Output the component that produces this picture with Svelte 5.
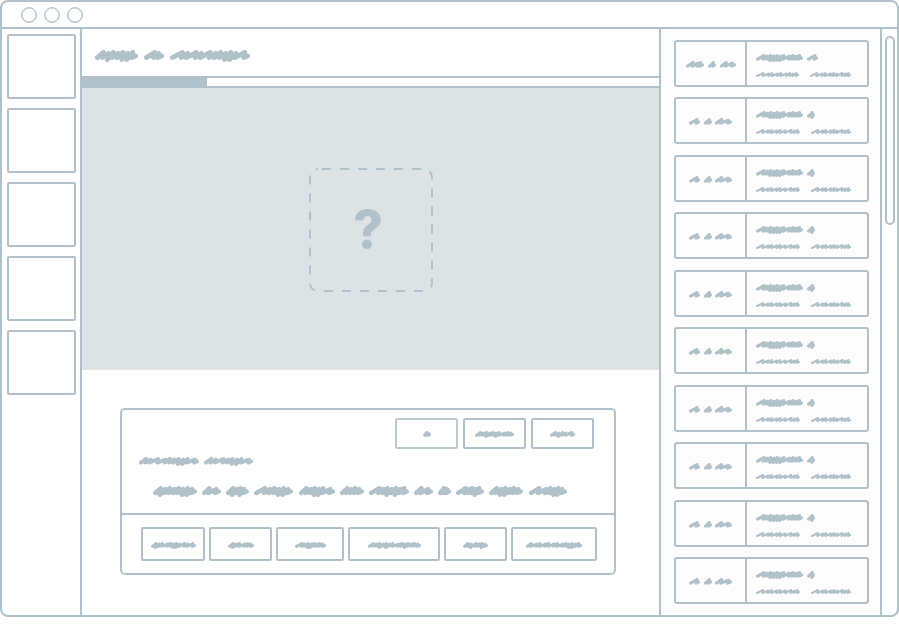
<script>
  // A word is [start, width, strokes]: w = wide stroke, n = narrow, g = narrow with a low tail
  const heading = [[0, 43, 'ngnnggn'], [49, 20, 'wn'], [75, 80, 'wnwnwnnggnw']];
  const subject = [[0, 60, 'nnwwnnggnw'], [65, 49, 'nnwnggnw']];
  const sentence = [
    [0, 44, 'gnnnnggn'], [49, 19, 'nw'], [73, 23, 'gngn'], [101, 39, 'wnnggn'],
    [146, 36, 'nnggnw'], [187, 24, 'nnnn'], [216, 40, 'wngngnn'], [261, 19, 'nw'],
    [285, 13, 'nn'], [303, 28, 'wnngn'], [336, 34, 'nggnnn'], [376, 38, 'wwnggn']
  ];
  const actions = [
    { label: 'Option', words: [[0, 8, 'nn']], light: true },
    { label: 'Second option', words: [[0, 39, 'nngnngnwnn']] },
    { label: 'Third option', words: [[0, 25, 'ngnnw']] }
  ];
  const choices = [
    { label: 'Choice 1', size: 64, words: [[0, 45, 'gnnwnggnwnw']] },
    { label: 'Choice 2', size: 63, words: [[0, 26, 'gnnwnn']] },
    { label: 'Choice 3', size: 68, words: [[0, 31, 'wnggnnnn']] },
    { label: 'Choice 4', size: 92, words: [[0, 53, 'nngngnnwngnnnn']] },
    { label: 'Choice 5', size: 63, words: [[0, 25, 'ngwngn']] },
    { label: 'Choice 6', size: 86, words: [[0, 56, 'nwnwnwnwnggnn']] }
  ];
  const firstRow = {
    side: [[0, 18, 'wwn'], [22, 8, 'w'], [34, 16, 'nw']],
    title: [[0, 47, 'wnggggnwnnn'], [51, 11, 'w']],
    left: [[0, 43, 'wwnwnwnnn']],
    right: [[0, 41, 'wwnwnnwnn']]
  };
  const otherRow = {
    side: [[0, 11, 'w'], [15, 8, 'w'], [26, 17, 'nw']],
    title: [[0, 47, 'wnggggnwnnn'], [51, 8, 'g']],
    left: [[0, 44, 'wwnwnwwnn']],
    right: [[0, 40, 'wwnwnnwnn']]
  };
  const rows = [firstRow, ...Array(9).fill(otherRow)];
  const tiles = [1, 2, 3, 4, 5];
  const progress = 21.7;

  const end = (words) => words.at(-1)[0] + words.at(-1)[1];

  function trace([start, width, strokes], height, pen) {
    const size = (c) => (c === 'w' ? 1.7 : 1);
    const total = [...strokes].reduce((sum, c) => sum + size(c), 0);
    const tail = Math.min(width / 5, height / 3);
    const unit = (width - pen - tail) / total;
    const top = pen / 2;
    const bottom = height - pen / 2;
    const rise = height / 6;
    let x = start + pen / 2;
    let d = `M${x} ${bottom - rise}`;
    [...strokes].forEach((c, i) => {
      x += unit * size(c);
      const peak = top + (i % 2) * rise * 0.5;
      const foot = c === 'g' ? bottom : bottom - rise;
      d += `L${(x + tail * 0.3).toFixed(1)} ${peak.toFixed(1)}L${x.toFixed(1)} ${foot.toFixed(1)}`;
    });
    return d + `L${start + width - pen / 2} ${height / 2}`;
  }
</script>

{#snippet scribble(words, height, pen)}
  <svg class="scribble" width={end(words)} {height} viewBox="0 0 {end(words)} {height}" aria-hidden="true">
    {#each words as word}
      <path d={trace(word, height, pen)} stroke-width={pen} />
    {/each}
  </svg>
{/snippet}

<div class="window">
  <header class="titlebar">
    <span class="dot"></span><span class="dot"></span><span class="dot"></span>
  </header>
  <div class="body">
    <nav class="tiles">
      {#each tiles as tile}
        <button class="tile" aria-label="Tile {tile}"></button>
      {/each}
    </nav>

    <main>
      <div class="heading">{@render scribble(heading, 12, 4.8)}</div>
      <div class="progress" role="progressbar" aria-label="Progress" aria-valuenow={progress}>
        <div class="bar" style="width: {progress}%"></div>
      </div>
      <div class="stage">
        <div class="drop">
          <svg class="outline" viewBox="0 0 124 124" aria-hidden="true">
            <rect x="1" y="1" width="122" height="122" rx="8" />
          </svg>
          <span class="mark">?</span>
        </div>
      </div>
      <section class="panel">
        <div class="question">
          <div class="actions">
            {#each actions as action}
              <button class="box action" class:light={action.light} aria-label={action.label}>
                {@render scribble(action.words, 7, 3)}
              </button>
            {/each}
          </div>
          <div class="subject">{@render scribble(subject, 9, 3.8)}</div>
          <div class="sentence">{@render scribble(sentence, 11, 4.5)}</div>
        </div>
        <div class="choices">
          {#each choices as choice}
            <button class="box" style="width: {choice.size}px" aria-label={choice.label}>
              {@render scribble(choice.words, 7, 3)}
            </button>
          {/each}
        </div>
      </section>
    </main>

    <aside class="list">
      {#each rows as row}
        <article class="card">
          <div class="side">{@render scribble(row.side, 8, 3.2)}</div>
          <div class="info">
            {@render scribble(row.title, 8, 3.2)}
            <div class="details">
              {@render scribble(row.left, 6, 2.2)}
              {@render scribble(row.right, 6, 2.2)}
            </div>
          </div>
        </article>
      {/each}
    </aside>

    <div class="track"><div class="thumb"></div></div>
  </div>
</div>

<style>
  :global(body) {
    margin: 0;
    background: #fff;
  }
  .window,
  .window * {
    box-sizing: border-box;
  }
  .window {
    --line: #b0c1ca;
    display: flex;
    flex-direction: column;
    min-height: calc(100vh - 9px);
    border: 2px solid var(--line);
    border-radius: 8px;
    overflow: hidden;
    font-family: Inter, 'Liberation Sans', sans-serif;
  }
  .scribble {
    display: block;
    flex: none;
    fill: none;
    stroke: var(--line);
    stroke-linecap: round;
    stroke-linejoin: round;
  }
  button {
    padding: 0;
    background: #fff;
    border: 2px solid var(--line);
    border-radius: 2px;
  }
  .titlebar {
    display: flex;
    align-items: center;
    gap: 7px;
    height: 27px;
    padding-left: 19px;
    border-bottom: 2px solid var(--line);
  }
  .dot {
    width: 16px;
    height: 16px;
    border: 1px solid var(--line);
    border-radius: 50%;
    box-shadow: inset 0 0 0 0.5px var(--line);
  }
  .body {
    flex: 1;
    display: grid;
    grid-template-columns: 80px 1fr 221px 17px;
  }
  .tiles {
    display: flex;
    flex-direction: column;
    gap: 9px;
    padding: 5px 4px 5px 5px;
    border-right: 2px solid var(--line);
  }
  .tile {
    height: 65px;
  }
  .heading {
    height: 47px;
    padding: 21px 13px 0;
  }
  .progress {
    height: 12px;
    border: solid var(--line);
    border-width: 2px 0;
  }
  .bar {
    height: 100%;
    background: var(--line);
  }
  .stage {
    display: grid;
    place-items: center;
    height: 282px;
    padding-top: 2px;
    background: #dde3e5;
  }
  .drop {
    display: grid;
    place-items: center;
    width: 124px;
    height: 124px;
  }
  .outline,
  .mark {
    grid-area: 1 / 1;
  }
  .outline {
    width: 100%;
    fill: none;
    stroke: var(--line);
    stroke-width: 2;
    stroke-dasharray: 9 9;
    stroke-dashoffset: -4;
  }
  .mark {
    padding-right: 5px;
    color: var(--line);
    font-size: 52px;
    font-weight: 800;
    line-height: 60px;
  }
  .panel {
    margin: 38px 43px 38px 38px;
    border: 2px solid var(--line);
    border-radius: 5px;
  }
  .question {
    padding: 8px 20px 16px 17px;
    border-bottom: 2px solid var(--line);
  }
  .actions {
    display: flex;
    justify-content: flex-end;
    gap: 5px;
  }
  .box {
    display: grid;
    place-items: center;
    height: 34px;
    padding-top: 2px;
  }
  .action {
    width: 63px;
    height: 31px;
  }
  .light {
    border-color: #bccad2;
  }
  .subject {
    padding-top: 8px;
  }
  .sentence {
    padding: 20px 0 0 14px;
  }
  .choices {
    display: flex;
    flex-wrap: wrap;
    gap: 4px;
    padding: 12px 17px 12px 19px;
  }
  .list {
    display: flex;
    flex-direction: column;
    justify-content: space-between;
    padding: 11px 11px 11px 13px;
    background: #fdfdfd;
    border-left: 2px solid var(--line);
  }
  .card {
    display: flex;
    height: 47px;
    border: 2px solid var(--line);
    border-radius: 3px;
  }
  .side {
    display: grid;
    place-items: center;
    width: 71px;
    padding-top: 3px;
    border-right: 2px solid var(--line);
  }
  .info {
    flex: 1;
    padding: 12px 9px 0;
  }
  .details {
    display: flex;
    gap: 11px;
    padding-top: 10px;
  }
  .track {
    padding: 7px 2px 0 3px;
    border-left: 2px solid var(--line);
  }
  .thumb {
    height: 189px;
    border: 2px solid var(--line);
    border-radius: 5px;
  }
</style>
